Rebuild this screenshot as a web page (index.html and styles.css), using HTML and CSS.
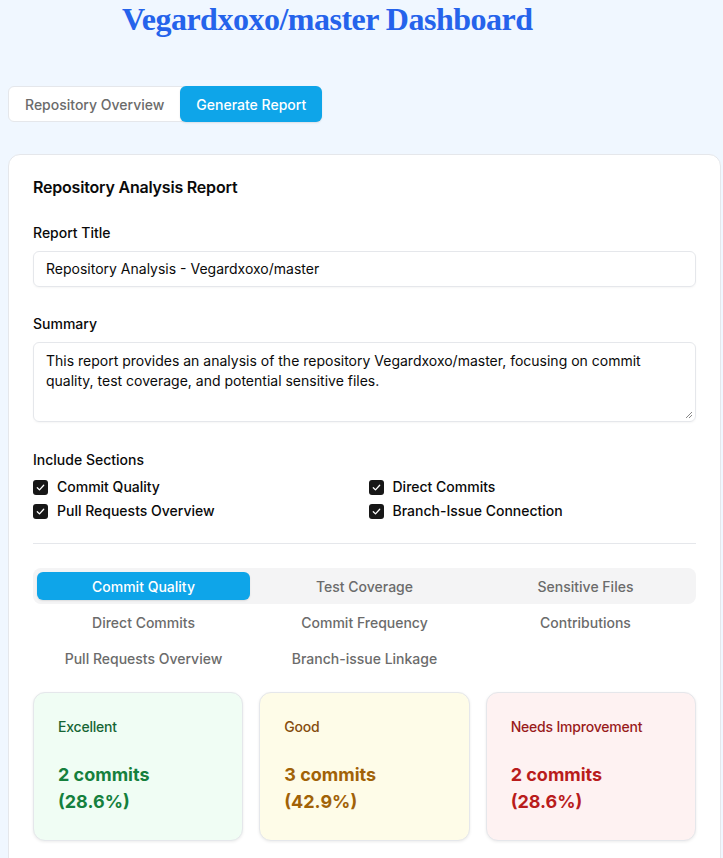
FILE: index.html
```html
<!DOCTYPE html>
<html>
<head>
<meta charset="utf-8">
<link rel="stylesheet" href="styles.css">
</head>
<body>
<div class="page">
  <h1 class="title">Vegardxoxo/master Dashboard</h1>
  <div class="nav">
    <button class="nav-btn">Repository Overview</button>
    <button class="nav-btn active">Generate Report</button>
  </div>
  <div class="card">
    <h2 class="card-title">Repository Analysis Report</h2>
    <label class="label">Report Title</label>
    <div class="input">Repository Analysis - Vegardxoxo/master</div>
    <label class="label">Summary</label>
    <div class="textarea">This report provides an analysis of the repository Vegardxoxo/master, focusing on commit quality, test coverage, and potential sensitive files.<svg class="grip" width="8" height="8" viewBox="0 0 8 8"><path d="M7 1L1 7M7 4L4 7" stroke="#888" stroke-width="1"/></svg></div>
    <label class="label">Include Sections</label>
    <div class="checks">
      <div class="check"><span class="box"><svg width="11" height="11" viewBox="0 0 12 12"><path d="M2.5 6.2l2.4 2.4 4.6-5" fill="none" stroke="#fff" stroke-width="1.4" stroke-linecap="round" stroke-linejoin="round"/></svg></span>Commit Quality</div>
      <div class="check"><span class="box"><svg width="11" height="11" viewBox="0 0 12 12"><path d="M2.5 6.2l2.4 2.4 4.6-5" fill="none" stroke="#fff" stroke-width="1.4" stroke-linecap="round" stroke-linejoin="round"/></svg></span>Direct Commits</div>
      <div class="check"><span class="box"><svg width="11" height="11" viewBox="0 0 12 12"><path d="M2.5 6.2l2.4 2.4 4.6-5" fill="none" stroke="#fff" stroke-width="1.4" stroke-linecap="round" stroke-linejoin="round"/></svg></span>Pull Requests Overview</div>
      <div class="check"><span class="box"><svg width="11" height="11" viewBox="0 0 12 12"><path d="M2.5 6.2l2.4 2.4 4.6-5" fill="none" stroke="#fff" stroke-width="1.4" stroke-linecap="round" stroke-linejoin="round"/></svg></span>Branch-Issue Connection</div>
    </div>
    <hr class="divider">
    <div class="tabs">
      <button class="tab active">Commit Quality</button>
      <button class="tab">Test Coverage</button>
      <button class="tab">Sensitive Files</button>
      <button class="tab">Direct Commits</button>
      <button class="tab">Commit Frequency</button>
      <button class="tab">Contributions</button>
      <button class="tab">Pull Requests Overview</button>
      <button class="tab">Branch-issue Linkage</button>
    </div>
    <div class="stats">
      <div class="stat green">
        <div class="stat-label">Excellent</div>
        <div class="stat-value">2 commits<br>(28.6%)</div>
      </div>
      <div class="stat yellow">
        <div class="stat-label">Good</div>
        <div class="stat-value">3 commits<br>(42.9%)</div>
      </div>
      <div class="stat red">
        <div class="stat-label">Needs Improvement</div>
        <div class="stat-value">2 commits<br>(28.6%)</div>
      </div>
    </div>
  </div>
</div>
</body>
</html>
```
FILE: styles.css
```css
* { box-sizing: border-box; }
html, body { margin: 0; padding: 0; }
body {
  background: #f0f7ff;
  font-family: Inter, "Noto Sans", sans-serif;
  color: #0a0a0a;
  overflow: hidden;
}
.page {
  padding: 0 0 0 8px;
  width: 721px;
}
.title {
  margin: 0;
  padding: 1px 0 0 114px;
  height: 86px;
  font-family: "Liberation Serif", serif;
  font-weight: 700;
  font-size: 32px;
  line-height: 36px;
  color: #2563eb;
  letter-spacing: -0.5px;
}
.nav {
  display: inline-flex;
  background: #fff;
  border: 1px solid #e5e7eb;
  border-radius: 6px;
  height: 36px;
}
.nav-btn {
  font-family: inherit;
  font-size: 14px;
  font-weight: 500;
  color: #6b6b6b;
  background: transparent;
  border: 0;
  padding: 0 16px;
  border-radius: 6px;
  height: 36px;
  margin-top: -1px;
}
.nav-btn.active {
  background: #0ea5e9;
  color: #fff;
  box-shadow: 0 1px 2px rgba(0,0,0,0.1);
  margin-right: -1px;
}
.card {
  margin-top: 32px;
  width: 713px;
  background: #fff;
  border: 1px solid #e5e7eb;
  border-radius: 12px;
  padding: 20px 24px 24px 24px;
  height: 720px;
}
.card-title {
  margin: 0 0 24px;
  font-size: 16px;
  font-weight: 600;
  line-height: 24px;
  letter-spacing: -0.2px;
}
.label {
  display: block;
  font-size: 14px;
  font-weight: 500;
  line-height: 20px;
  margin-bottom: 8px;
}
.input {
  height: 36px;
  border: 1px solid #e5e7eb;
  border-radius: 6px;
  padding: 0 12px;
  font-size: 14px;
  line-height: 34px;
  margin-bottom: 27px;
  box-shadow: 0 1px 2px rgba(0,0,0,0.04);
}
.textarea {
  position: relative;
  height: 80px;
  border: 1px solid #e5e7eb;
  border-radius: 6px;
  padding: 8px 12px;
  font-size: 14px;
  line-height: 20px;
  margin-bottom: 28px;
  box-shadow: 0 1px 2px rgba(0,0,0,0.04);
}
.grip {
  position: absolute;
  right: 2px;
  bottom: 2px;
}
.checks {
  display: grid;
  grid-template-columns: 1fr 1fr;
  column-gap: 8px;
  row-gap: 4px;
  margin-top: -1px;
}
.check {
  display: flex;
  align-items: center;
  font-size: 14px;
  font-weight: 500;
  line-height: 20px;
}
.box {
  width: 15px;
  height: 15px;
  border-radius: 3px;
  background: #171717;
  display: inline-flex;
  align-items: center;
  justify-content: center;
  margin-right: 9px;
}
.divider {
  border: 0;
  border-top: 1px solid #e5e7eb;
  margin: 22px 0 24px;
}
.tabs {
  display: grid;
  grid-template-columns: repeat(3, 1fr);
  gap: 8px;
  padding: 4px;
  height: 36px;
  background: #f4f4f5;
  border-radius: 8px;
}
.tab {
  font-family: inherit;
  height: 28px;
  border: 0;
  background: transparent;
  border-radius: 6px;
  font-size: 14px;
  font-weight: 500;
  color: #6b6b6b;
}
.tab.active {
  background: #0ea5e9;
  color: #fff;
  box-shadow: 0 1px 2px rgba(0,0,0,0.1);
}
.stats {
  margin-top: 88px;
  display: grid;
  grid-template-columns: repeat(3, 1fr);
  gap: 16px;
}
.stat {
  border: 1px solid #e5e7eb;
  border-radius: 12px;
  padding: 24px;
  box-shadow: 0 1px 3px rgba(0,0,0,0.08);
  height: 149px;
}
.stat-label {
  font-size: 14px;
  font-weight: 500;
  line-height: 20px;
  margin-bottom: 24px;
  letter-spacing: -0.2px;
}
.stat-value {
  font-size: 18px;
  font-weight: 700;
  line-height: 27px;
}
.green { background: #f0fdf4; }
.green .stat-label { color: #166534; }
.green .stat-value { color: #15803d; }
.yellow { background: #fefce8; }
.yellow .stat-label { color: #854d0e; }
.yellow .stat-value { color: #a16207; }
.red { background: #fef2f2; }
.red .stat-label { color: #991b1b; }
.red .stat-value { color: #b91c1c; }
```
